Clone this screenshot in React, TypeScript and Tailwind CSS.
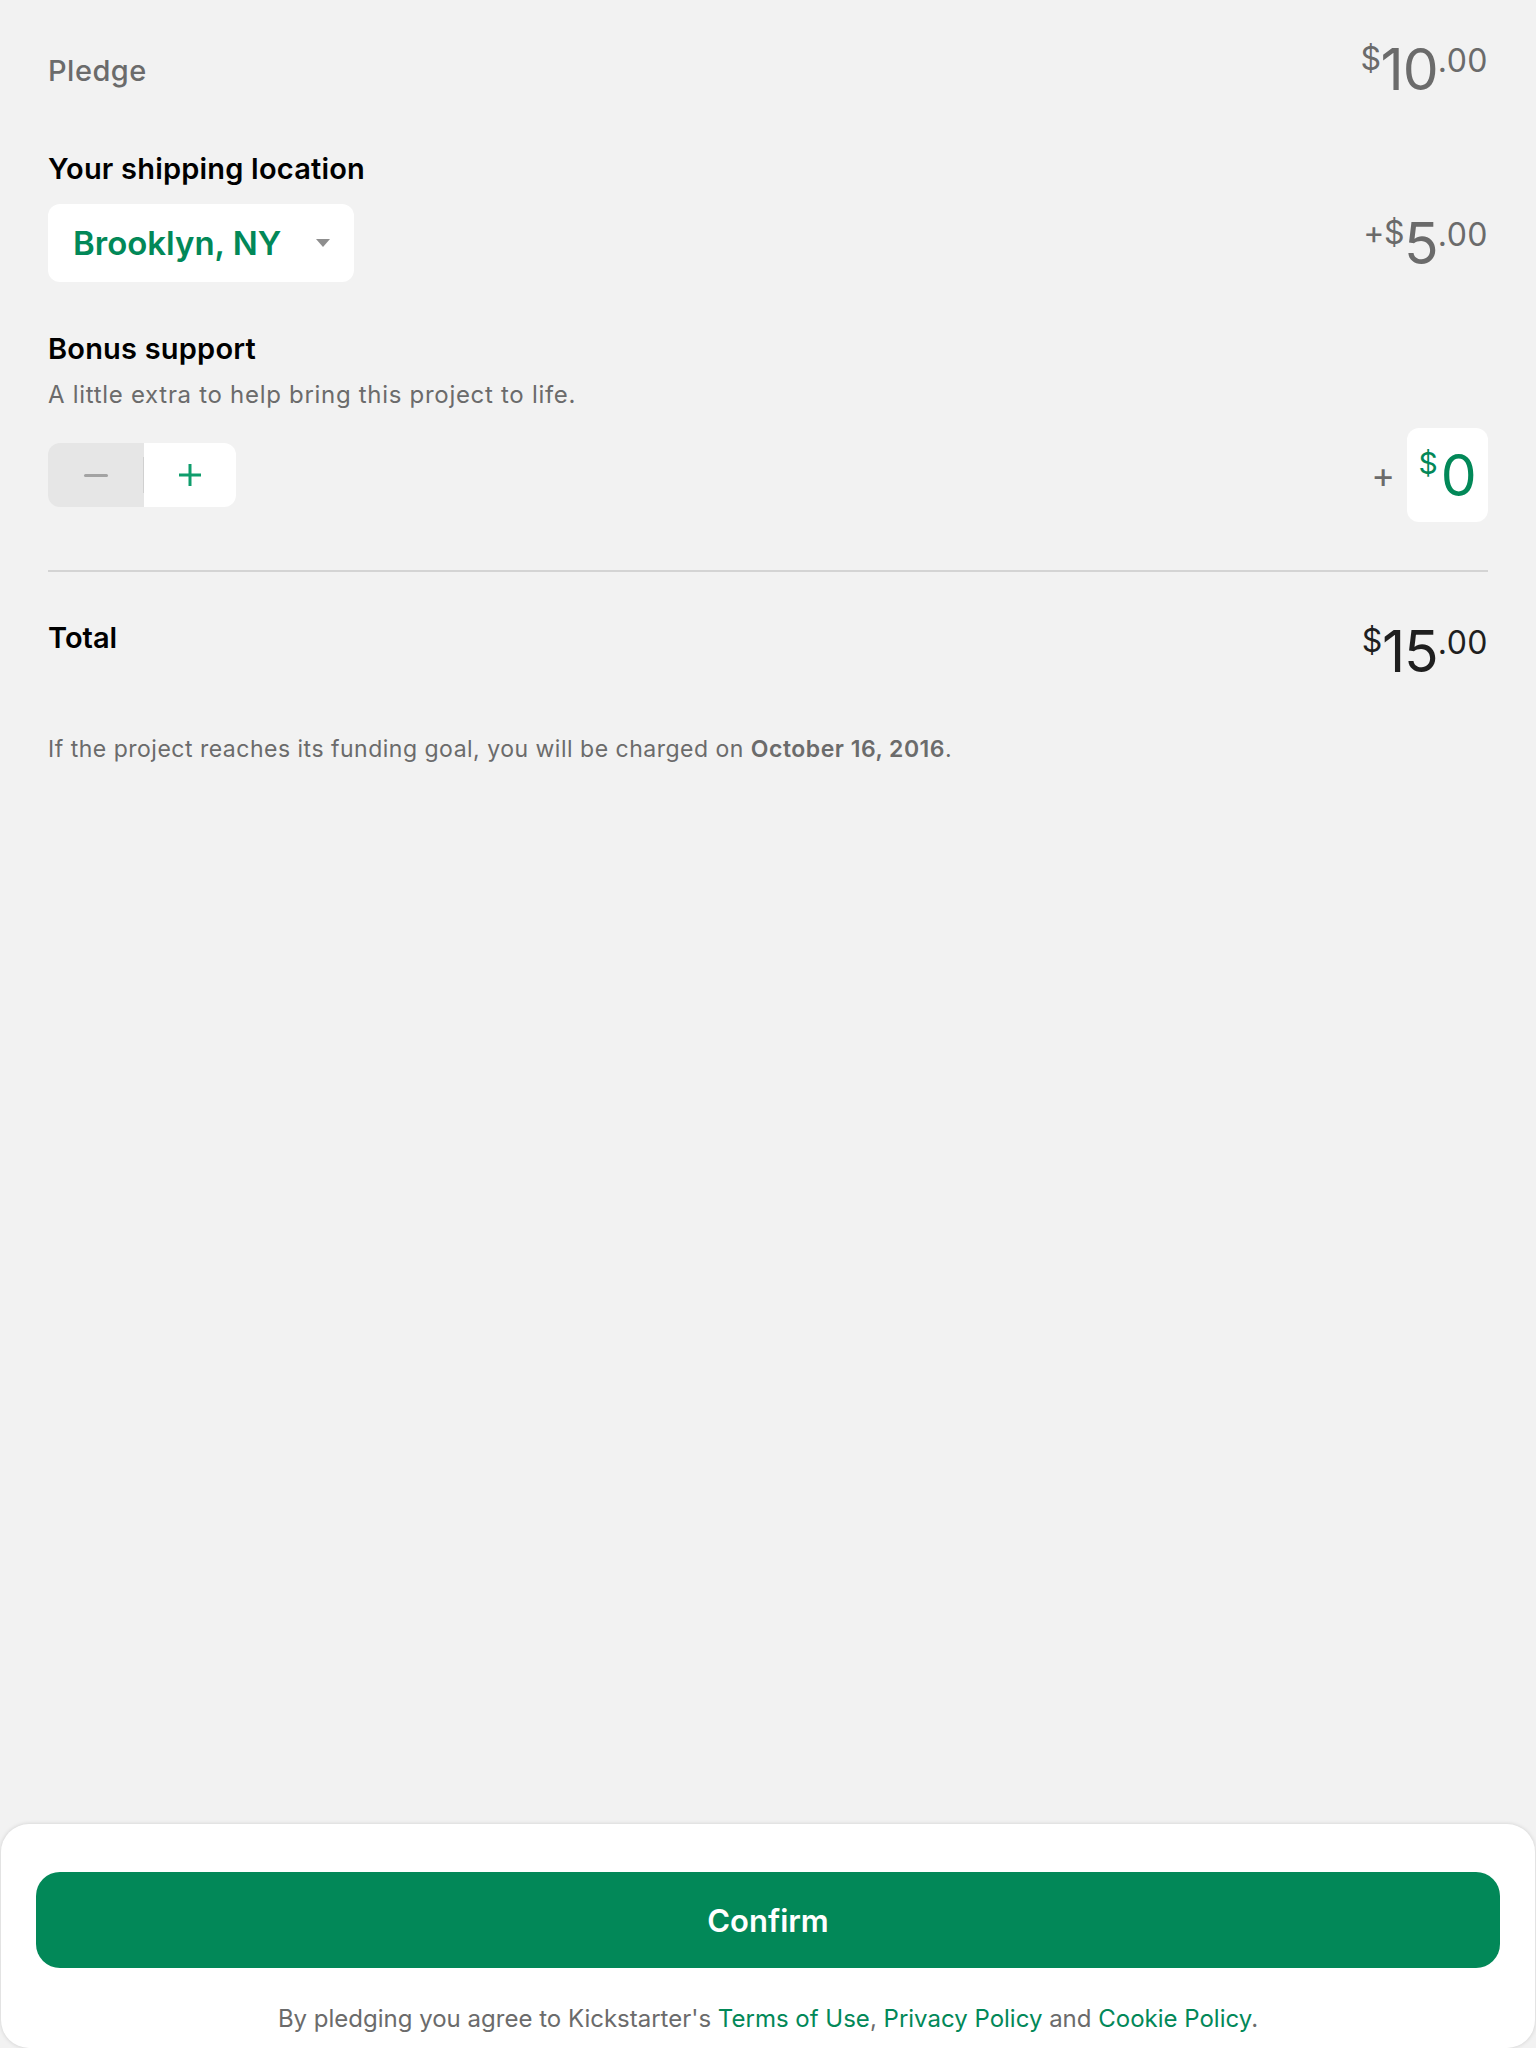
import React from "react";

const font = { fontFamily: "Inter, 'Noto Sans', sans-serif" };

function Price({
  prefix,
  whole,
  cents,
  color,
}: {
  prefix: string;
  whole: string;
  cents: string;
  color: string;
}) {
  return (
    <div className={`flex items-start leading-none ${color}`}>
      <span className="text-[32px] leading-none mt-[2px] tracking-[-0.5px]">{prefix}</span>
      <span className="text-[57px] leading-none tracking-[-1px]">{whole}</span>
      <span className="text-[32px] leading-none mt-[4px] tracking-[0.5px]">{cents}</span>
    </div>
  );
}

export default function App() {
  return (
    <div className="min-h-[2048px] w-full bg-[#f2f2f2] flex flex-col" style={font}>
      <div className="px-[48px] pt-[41px] flex flex-col">
        {/* Pledge */}
        <div className="flex justify-between items-start">
          <div className="text-[29px] leading-none mt-[15px] font-medium tracking-[0.5px] text-[#6b6b6b]">Pledge</div>
          <Price prefix="$" whole="10" cents=".00" color="text-[#6b6b6b]" />
        </div>

        {/* Shipping */}
        <div className="mt-[56px] text-[29px] leading-none font-semibold tracking-[0.2px] text-black">
          Your shipping location
        </div>
        <div className="mt-[21px] flex justify-between items-center">
          <div className="h-[78px] w-[306px] rounded-[12px] bg-white flex items-center justify-between pl-[25px] pr-[24px]">
            <span className="text-[33px] leading-none font-semibold text-[#028858]">Brooklyn, NY</span>
            <svg width="14" height="8" viewBox="0 0 14 8">
              <path d="M0 0 H14 L7 8 Z" fill="#8e8e8e" />
            </svg>
          </div>
          <Price prefix="+$" whole="5" cents=".00" color="text-[#6b6b6b]" />
        </div>

        {/* Bonus support */}
        <div className="mt-[52px] text-[29px] leading-none font-semibold tracking-[0.2px] text-black">Bonus support</div>
        <div className="mt-[20px] text-[24px] leading-none tracking-[0.7px] text-[#6b6b6b]">
          A little extra to help bring this project to life.
        </div>
        <div className="mt-[21px] flex justify-between items-center">
          <div className="flex h-[64px] w-[188px] rounded-[12px] overflow-hidden">
            <div className="w-[95px] h-full bg-[#e6e6e6] flex items-center justify-center">
              <div className="w-[24px] h-[3px] bg-[#a3a3a3] rounded-full" />
            </div>
            <div className="w-[1px] h-full bg-[#e6e6e6] flex items-center">
              <div className="w-[1px] h-[36px] bg-[#d0d0d0]" />
            </div>
            <div className="flex-1 h-full bg-white flex items-center justify-center">
              <svg width="24" height="24" viewBox="0 0 24 24">
                <path d="M12 1 V23 M1 12 H23" stroke="#0f9d6c" strokeWidth="3" />
              </svg>
            </div>
          </div>
          <div className="flex items-center">
            <span className="text-[36px] leading-none text-[#6b6b6b] mr-[12px]">+</span>
            <div className="h-[94px] w-[81px] rounded-[12px] bg-white flex items-center justify-center">
              <div className="flex items-start text-[#028858] leading-none">
                <span className="text-[30px] leading-none mt-[1px] mr-[3px]">$</span>
                <span className="text-[57px] leading-none">0</span>
              </div>
            </div>
          </div>
        </div>

        <div className="mt-[48px] h-[2px] bg-[#d4d4d4]" />

        {/* Total */}
        <div className="mt-[51px] flex justify-between items-start">
          <div className="text-[29px] leading-none font-semibold text-black">Total</div>
          <Price prefix="$" whole="15" cents=".00" color="text-[#1f1f1f]" />
        </div>

        <div className="mt-[58px] text-[23px] leading-none tracking-[0.5px] text-[#6b6b6b]">
          If the project reaches its funding goal, you will be charged on{" "}
          <span className="font-semibold">October 16, 2016</span>.
        </div>
      </div>

      {/* Bottom panel */}
      <div className="mt-auto mx-[1px] h-[224px] rounded-[28px] bg-white shadow-[0_0_4px_rgba(0,0,0,0.15)] px-[35px] pt-[48px] flex flex-col">
        <button className="h-[96px] w-full rounded-[24px] bg-[#028858] text-white text-[31px] font-semibold leading-none flex items-center justify-center">
          Confirm
        </button>
        <div className="mt-[39px] text-[24px] leading-none text-[#6b6b6b] text-center">
          By pledging you agree to Kickstarter's <span className="text-[#028858]">Terms of Use</span>,{" "}
          <span className="text-[#028858]">Privacy Policy</span> and{" "}
          <span className="text-[#028858]">Cookie Policy</span>.
        </div>
      </div>
    </div>
  );
}
